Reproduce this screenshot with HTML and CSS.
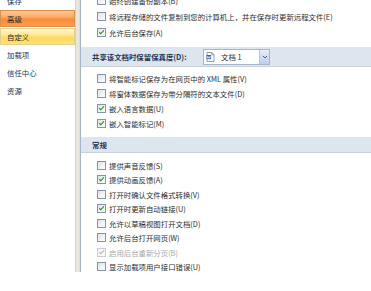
FILE: index.html
```html
<!DOCTYPE html>
<html lang="zh-CN">
<head>
<meta charset="utf-8">
<title>Word 选项 - 高级</title>
<link rel="stylesheet" href="styles.css">
</head>
<body>
<div class="frame">
  <nav class="sidebar">
    <ul class="nav">
      <li class="nav-item">保存</li>
      <li class="nav-item selected">高级</li>
      <li class="nav-item hover">自定义</li>
      <li class="nav-item">加载项</li>
      <li class="nav-item">信任中心</li>
      <li class="nav-item">资源</li>
    </ul>
  </nav>
  <div class="splitter"></div>
  <main class="content">
    <div class="group group-top">
      <div class="row"><span class="cb"></span><span class="label">始终创建备份副本(B)</span></div>
      <div class="row"><span class="cb"></span><span class="label">将远程存储的文件复制到您的计算机上，并在保存时更新远程文件(E)</span></div>
      <div class="row"><span class="cb"><svg viewBox="0 0 9 9"><path d="M1.8 4.4 L3.6 6.3 L7.2 2.2"/></svg></span><span class="label">允许后台保存(A)</span></div>
    </div>

    <div class="band band-tall">
      <span class="band-title band-title-fixed">共享该文档时保留保真度(D):</span>
      <div class="dropdown">
        <svg class="doc-icon" viewBox="0 0 9 10"><path class="page" d="M1 0.5 H5.8 L8 2.7 V9.5 H1 Z"/><path class="fold" d="M5.8 0.5 V2.7 H8"/><rect class="w" x="0.5" y="3" width="4.6" height="4.2"/><path class="wl" d="M1.2 4 L1.9 6.4 L2.8 4.6 L3.7 6.4 L4.4 4"/></svg>
        <span class="dd-text">文档 1</span>
        <span class="dd-btn"><svg viewBox="0 0 8 6"><path d="M2 2 L4 4 L6 2"/></svg></span>
      </div>
    </div>

    <div class="group group-mid">
      <div class="row"><span class="cb"></span><span class="label">将智能标记保存为在网页中的 XML 属性(V)</span></div>
      <div class="row"><span class="cb"></span><span class="label">将窗体数据保存为带分隔符的文本文件(D)</span></div>
      <div class="row"><span class="cb"><svg viewBox="0 0 9 9"><path d="M1.8 4.4 L3.6 6.3 L7.2 2.2"/></svg></span><span class="label">嵌入语言数据(U)</span></div>
      <div class="row"><span class="cb"><svg viewBox="0 0 9 9"><path d="M1.8 4.4 L3.6 6.3 L7.2 2.2"/></svg></span><span class="label">嵌入智能标记(M)</span></div>
    </div>

    <div class="band band-short">
      <span class="band-title">常规</span>
    </div>

    <div class="group group-bottom">
      <div class="row"><span class="cb"></span><span class="label">提供声音反馈(S)</span></div>
      <div class="row"><span class="cb"><svg viewBox="0 0 9 9"><path d="M1.8 4.4 L3.6 6.3 L7.2 2.2"/></svg></span><span class="label">提供动画反馈(A)</span></div>
      <div class="row"><span class="cb"></span><span class="label">打开时确认文件格式转换(V)</span></div>
      <div class="row"><span class="cb"><svg viewBox="0 0 9 9"><path d="M1.8 4.4 L3.6 6.3 L7.2 2.2"/></svg></span><span class="label">打开时更新自动链接(U)</span></div>
      <div class="row"><span class="cb"></span><span class="label">允许以草稿视图打开文档(D)</span></div>
      <div class="row"><span class="cb"></span><span class="label">允许后台打开网页(W)</span></div>
      <div class="row disabled"><span class="cb"><svg viewBox="0 0 9 9"><path d="M1.8 4.4 L3.6 6.3 L7.2 2.2"/></svg></span><span class="label">启用后台重新分页(B)</span></div>
      <div class="row"><span class="cb"></span><span class="label">显示加载项用户接口错误(U)</span></div>
    </div>
  </main>
</div>
</body>
</html>
```

FILE: styles.css
```css
* { box-sizing: border-box; }

html, body {
  margin: 0;
  padding: 0;
  background: #ffffff;
}

body {
  width: 371px;
  height: 291px;
  overflow: hidden;
  font-family: "Noto Sans CJK SC", "Noto Sans", sans-serif;
  font-size: 7.4px;
  color: #2b2b2b;
}

.frame {
  display: flex;
  height: 272px;
  overflow: hidden;
}

/* ---------- sidebar ---------- */
.sidebar {
  flex: 0 0 75px;
  background: #ffffff;
}

.nav {
  list-style: none;
  margin: -8px 0 0 0;
  padding: 0;
}

.nav-item {
  height: 17px;
  line-height: 15px;
  padding-left: 6px;
  margin-bottom: 1px;
  border: 1px solid transparent;
  color: #22385c;
  white-space: nowrap;
}

.nav-item.selected {
  color: #2a2a2a;
  border-color: #d99048;
  background: linear-gradient(#fcc795 0%, #fbac66 40%, #f98c38 55%, #fa9d50 100%);
  margin-bottom: 1px;
}

.nav-item.hover {
  color: #2a2a2a;
  border-color: #e2d08e;
  background: linear-gradient(#fff6cc 0%, #ffe794 40%, #ffd75a 60%, #ffe27a 100%);
  margin-bottom: 1px;
}

.splitter {
  flex: 0 0 5px;
  border-left: 1px solid #c7d3df;
  border-right: 1px solid #d8dde4;
  background: #e9e7dc;
}

/* ---------- content ---------- */
.content {
  flex: 1;
  border-left: 1px solid #a6b5c7;
  overflow: hidden;
  background: #ffffff;
}

.group-top { margin-top: -8px; }
.group-top .row { height: 16px; }

.group-mid { margin-top: 3.5px; }
.group-mid .row { height: 15px; }

.group-bottom { margin-top: 4.75px; }
.group-bottom .row { height: 14.5px; }

.row {
  display: flex;
  align-items: center;
  padding-left: 16px;
  white-space: nowrap;
}

.cb {
  flex: 0 0 9px;
  width: 9px;
  height: 9px;
  border: 1px solid #8794a6;
  background: linear-gradient(135deg, #dde0e5 0%, #f2f3f5 55%, #ffffff 100%);
  display: flex;
}

.cb svg {
  width: 7px;
  height: 7px;
}

.cb svg path {
  fill: none;
  stroke: #22a022;
  stroke-width: 1.5;
  stroke-linecap: round;
  stroke-linejoin: round;
}

.label {
  margin-left: 3px;
  color: #2e2e2e;
}

.row.disabled .cb {
  border-color: #c9cdd3;
  background: #f7f7f7;
}
.row.disabled .cb svg path { stroke: #b9bcc0; }
.row.disabled .label { color: #a9a9a9; }

/* ---------- section bands ---------- */
.band {
  display: flex;
  align-items: center;
  padding-left: 11px;
  background: #dde6ef;
  border-bottom: 1px solid #c9d0d8;
}

.band-tall {
  margin-top: 7px;
  height: 20px;
}

.band-short {
  margin-top: 6.5px;
  height: 16px;
}

.band-title {
  font-weight: bold;
  color: #1e3557;
  white-space: nowrap;
}

.band-title-fixed {
  flex: 0 0 111px;
}

.dropdown {
  display: flex;
  align-items: center;
  width: 67px;
  height: 16px;
  border: 1px solid #a7b6c8;
  background: #ffffff;
}

.doc-icon {
  width: 9px;
  height: 10px;
  margin-left: 2px;
}
.doc-icon .page { fill: #ffffff; stroke: #6f86a8; stroke-width: 0.8; }
.doc-icon .fold { fill: none; stroke: #6f86a8; stroke-width: 0.8; }
.doc-icon .w { fill: #2f62b5; }
.doc-icon .wl { fill: none; stroke: #ffffff; stroke-width: 0.7; }

.dd-text {
  margin-left: 6px;
  flex: 1;
  color: #2b2b2b;
}

.dd-btn {
  flex: 0 0 10px;
  height: 100%;
  display: flex;
  align-items: center;
  justify-content: center;
  background: linear-gradient(#e9f0fb 0%, #cfdcf3 50%, #bdd0ef 100%);
  border-left: 1px solid #b7c6dc;
}

.dd-btn svg {
  width: 8px;
  height: 6px;
}
.dd-btn svg path {
  fill: none;
  stroke: #4d5e78;
  stroke-width: 1;
}
```
